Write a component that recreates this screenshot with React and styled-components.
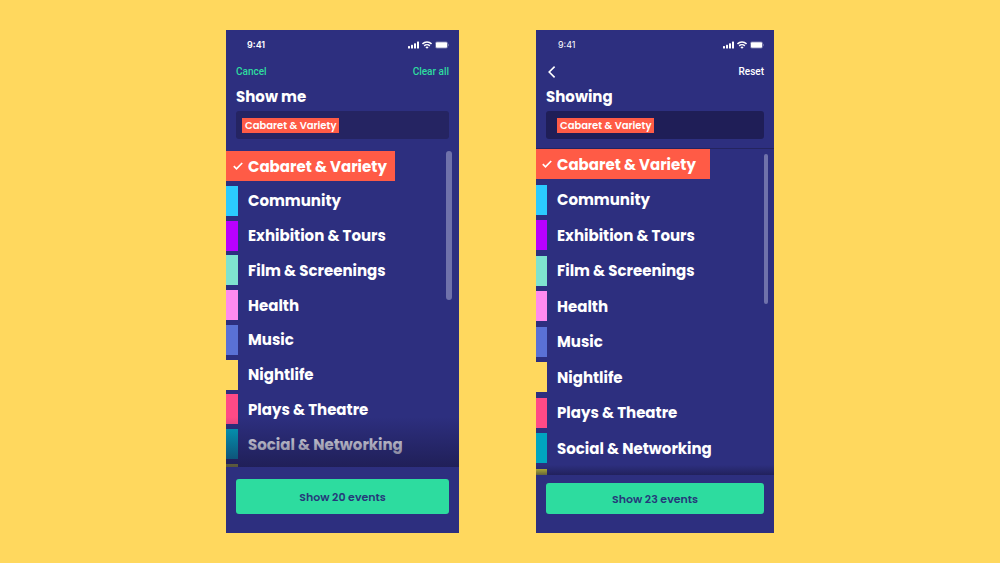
import React from 'react'
import styled, { createGlobalStyle, ThemeProvider } from "styled-components"

const theme = {
    page: "#ffd85e",
    bg: "#2d2f7f",
    text_primary: "#ffffff",
    primary: "#2ddc9f",
    selected: "#ff5b46",
};

const GlobalStyle = createGlobalStyle`
    * {
        box-sizing: border-box;
    }
    body {
        margin: 0;
        background-color: ${theme.page};
        font-family: Poppins, Inter, sans-serif;
    }
    button {
        border: none;
        padding: 0;
        background: none;
        font-family: inherit;
        cursor: pointer;
    }
`;
const Stage = styled.main`
    display: grid;
    grid-template-columns: 233fr 238fr;
    grid-template-rows: minmax(0, 1fr);
    gap: 77px;
    width: 100%;
    max-width: 548px;
    height: 100vh;
    margin: 0 auto;
    padding: 30px 0;
`;
const Phone = styled.section`
    display: flex;
    flex-direction: column;
    min-height: 0;
    background-color: ${({ theme }) => theme.bg};
    color: ${({ theme }) => theme.text_primary};
`;
const Header = styled.header`
    padding: 8px 10px ${({ $line }) => ($line ? "9px" : "12px")};
    border-bottom: ${({ $line }) => ($line ? "1px solid #24245f" : "none")};
`;
const StatusBar = styled.div`
    display: flex;
    align-items: center;
    justify-content: space-between;
    height: 13px;
    padding-left: ${({ $light }) => ($light ? "12px" : "11px")};
    font-family: Inter, sans-serif;
    font-size: 9px;
    font-weight: ${({ $light }) => ($light ? 400 : 600)};
`;
const StatusIcons = styled.div`
    display: flex;
    align-items: center;
    gap: 3px;
`;
const ActionBar = styled.div`
    display: flex;
    align-items: center;
    justify-content: space-between;
    height: 16px;
    margin-top: 13px;
`;
const Action = styled.button`
    display: flex;
    color: ${({ theme, $plain }) => ($plain ? theme.text_primary : theme.primary)};
    font-family: Roboto, sans-serif;
    font-size: 10px;
    font-weight: 500;
    line-height: 16px;
`;
const Title = styled.h1`
    margin: 7px 0 4px;
    font-size: 15px;
    font-weight: 700;
    line-height: 20px;
`;
const Filters = styled.div`
    display: flex;
    align-items: center;
    height: 28px;
    padding: 0 ${({ $inset }) => $inset}px;
    border-radius: 3px;
    background-color: ${({ $deep }) => ($deep ? "#1f1e57" : "#252462")};
`;
const Tag = styled.span`
    padding: 0 3px;
    background-color: ${({ theme }) => theme.selected};
    font-size: 10px;
    font-weight: 600;
    line-height: 15px;
`;
const Body = styled.div`
    position: relative;
    display: flex;
    flex: 1;
    min-height: 0;
`;
const List = styled.ul`
    display: flex;
    flex: 1;
    flex-direction: column;
    justify-content: space-between;
    margin: 0;
    padding: 0;
    list-style: none;
    overflow: hidden;
`;
const Item = styled.li`
    display: flex;
    flex: 0 0 30px;
`;
const NextItem = styled.li`
    flex: 0 0 ${({ $peek }) => $peek}px;
    width: ${({ $swatch }) => $swatch}px;
    background-color: #d6d42c;
`;
const Option = styled.label`
    display: flex;
    align-items: center;
    padding-right: ${({ $end }) => $end}px;
    background-color: ${({ theme, $checked }) => ($checked ? theme.selected : "transparent")};
    font-size: 15px;
    font-weight: 700;
    cursor: pointer;
`;
const Checkbox = styled.input`
    position: absolute;
    width: 1px;
    height: 1px;
    margin: 0;
    opacity: 0;
`;
const Swatch = styled.span`
    display: flex;
    align-items: center;
    justify-content: flex-end;
    align-self: stretch;
    width: ${({ $width }) => $width}px;
    margin-right: 10px;
    background-color: ${({ $color }) => $color};
`;
const CheckMark = styled.svg`
    flex: none;
    margin-right: -5px;
`;
const ScrollThumb = styled.div`
    width: ${({ $thick }) => ($thick ? "6px" : "4px")};
    height: ${({ $thick }) => ($thick ? "47%" : "46%")};
    margin: ${({ $thick }) => ($thick ? "0 7px 0 0" : "5px 6px 0 0")};
    border-radius: 3px;
    background-color: #7072ab;
`;
const Fade = styled.div`
    position: absolute;
    right: 0;
    bottom: 0;
    left: 0;
    height: ${({ $tall }) => ($tall ? "50px" : "10px")};
    background: linear-gradient(
        rgba(26, 24, 70, 0),
        rgba(26, 24, 70, ${({ $tall }) => ($tall ? 0.68 : 0.6)})
    );
    pointer-events: none;
`;
const Footer = styled.footer`
    padding: ${({ $compact }) => ($compact ? "8px" : "12px")} 10px 19px;
`;
const SubmitButton = styled.button`
    width: 100%;
    height: ${({ $compact }) => ($compact ? "31px" : "35px")};
    padding-top: 2px;
    border-radius: 3px;
    background-color: ${({ theme }) => theme.primary};
    color: #25397a;
    font-size: 11px;
    font-weight: 600;
`;

const categories = [
    { name: "Cabaret & Variety", color: "#ff5b46" },
    { name: "Community", color: "#2bcbff" },
    { name: "Exhibition & Tours", color: "#b900ff" },
    { name: "Film & Screenings", color: "#7fe3d0" },
    { name: "Health", color: "#ff8af0" },
    { name: "Music", color: "#5a71d6" },
    { name: "Nightlife", color: "#ffd85e" },
    { name: "Plays & Theatre", color: "#ff4a86" },
    { name: "Social & Networking", color: "#00a5c0" },
];

const Status = ({ light }) => (
    <StatusBar $light={light}>
        <span>9:41</span>
        <StatusIcons>
            <svg width="11" height="8" viewBox="0 0 11 8" fill="#fff">
                <rect x="0" y="5" width="2" height="2.4" rx=".5" />
                <rect x="3" y="3.8" width="2" height="3.6" rx=".5" />
                <rect x="6" y="2.2" width="2" height="5.2" rx=".5" />
                <rect x="9" y=".6" width="2" height="6.8" rx=".5" />
            </svg>
            <svg width="10" height="8" viewBox="0 0 10 8" fill="none" stroke="#fff" strokeWidth="1.5">
                <path d="M.5 2.900a6.400 6.400 0 0 1 9 0" />
                <path d="M2.200 4.900a4 4 0 0 1 5.600 0" />
                <path d="M5 7.800 3.400 6.200a2.300 2.300 0 0 1 3.200 0z" fill="#fff" stroke="none" />
            </svg>
            <svg width="14" height="8" viewBox="0 0 14 8">
                <rect x=".3" y=".8" width="12.400" height="6.400" rx="1.700" fill="none" stroke="#fff" strokeOpacity=".45" strokeWidth=".6" />
                <rect x=".9" y="1.300" width="11.200" height="5.400" rx="1" fill="#fff" />
                <path d="M13.200 3v2c.5-.2.7-.6.7-1s-.2-.8-.7-1z" fill="#fff" fillOpacity=".5" />
            </svg>
        </StatusIcons>
    </StatusBar>
)

const Categories = ({ id, swatch, peek, end }) => (
    <List>
        {categories.map(({ name, color }, i) => (
            <Item key={name}>
                <Option htmlFor={`${id}-${i}`} $checked={i === 0} $end={end}>
                    <Checkbox type="checkbox" id={`${id}-${i}`} defaultChecked={i === 0} />
                    <Swatch $width={swatch} $color={color}>
                        {i === 0 && (
                            <CheckMark width="10" height="8" viewBox="0 0 10 8" fill="none" stroke="#fff" strokeWidth="1.7">
                                <path d="M.8 4.200 3.500 6.800 9.200 1" />
                            </CheckMark>
                        )}
                    </Swatch>
                    {name}
                </Option>
            </Item>
        ))}
        <NextItem $peek={peek} $swatch={swatch} />
    </List>
)

const App = () => {
  return (
    <ThemeProvider theme={theme}>
        <GlobalStyle />
        <Stage>
            <Phone>
                <Header>
                    <Status />
                    <ActionBar>
                        <Action type="button">Cancel</Action>
                        <Action type="button">Clear all</Action>
                    </ActionBar>
                    <Title>Show me</Title>
                    <Filters $inset={6}>
                        <Tag>Cabaret &amp; Variety</Tag>
                    </Filters>
                </Header>
                <Body>
                    <Categories id="show" swatch={12} peek={3} end={8} />
                    <ScrollThumb $thick />
                    <Fade $tall />
                </Body>
                <Footer>
                    <SubmitButton type="button">Show 20 events</SubmitButton>
                </Footer>
            </Phone>
            <Phone>
                <Header $line>
                    <Status light />
                    <ActionBar>
                        <Action type="button" aria-label="Back" $plain>
                            <svg width="10" height="12" viewBox="0 0 10 12" fill="none" stroke="#fff" strokeWidth="1.6">
                                <path d="M8.600.6 3.200 6l5.400 5.400" />
                            </svg>
                        </Action>
                        <Action type="button" $plain>Reset</Action>
                    </ActionBar>
                    <Title>Showing</Title>
                    <Filters $inset={11} $deep>
                        <Tag>Cabaret &amp; Variety</Tag>
                    </Filters>
                </Header>
                <Body>
                    <Categories id="showing" swatch={11} peek={6} end={14} />
                    <ScrollThumb />
                    <Fade />
                </Body>
                <Footer $compact>
                    <SubmitButton type="button" $compact>Show 23 events</SubmitButton>
                </Footer>
            </Phone>
        </Stage>
    </ThemeProvider>
  )
}

export default App
